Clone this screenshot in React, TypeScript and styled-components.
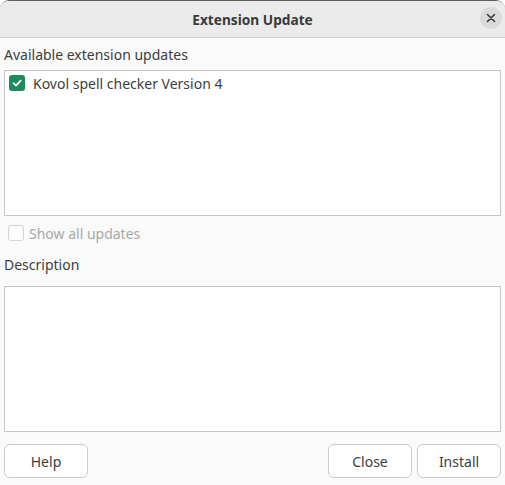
import React from "react";
import styled, { createGlobalStyle } from "styled-components";

const Global = createGlobalStyle`
  html, body { margin: 0; padding: 0; background: #ffffff; }
  body { font-family: "Noto Sans", "DejaVu Sans", sans-serif; }
  * { box-sizing: border-box; }
`;

const Window = styled.div`
  width: 505px;
  height: 485px;
  display: flex;
  flex-direction: column;
  background: #fafafa;
  border-top: 1px solid #5e5e5e;
  border-radius: 9px 9px 0 0;
  overflow: hidden;
  color: #3d3d3d;
  font-size: 14px;
`;

const TitleBar = styled.div`
  height: 37px;
  flex: none;
  position: relative;
  display: flex;
  align-items: center;
  justify-content: center;
  background: #ebebeb;
  border-bottom: 1px solid #cfcfcf;
  font-weight: bold;
  font-size: 13.7px;
  color: #3a3a3a;
`;

const CloseButton = styled.div`
  position: absolute;
  right: 3px;
  top: 6px;
  width: 22px;
  height: 22px;
  border-radius: 50%;
  background: #dadada;
  display: flex;
  align-items: center;
  justify-content: center;
`;

const Body = styled.div`
  flex: 1;
  display: flex;
  flex-direction: column;
  padding: 7px 4px 7px 4px;
`;

const Label = styled.div<{ $top?: number; $bottom?: number }>`
  height: 20px;
  line-height: 20px;
  margin-top: ${(p) => p.$top ?? 0}px;
  margin-bottom: ${(p) => p.$bottom ?? 5}px;
`;

const ListBox = styled.div`
  height: 146px;
  flex: none;
  background: #ffffff;
  border: 1px solid #c6c6c6;
  padding: 3px 4px;
`;

const Row = styled.div`
  display: flex;
  align-items: center;
  gap: 8px;
  height: 18px;
`;

const CheckBox = styled.div<{ $checked?: boolean; $disabled?: boolean }>`
  width: 16px;
  height: 16px;
  border-radius: 3px;
  flex: none;
  display: flex;
  align-items: center;
  justify-content: center;
  background: ${(p) => (p.$checked ? "#1f8a5c" : "#ffffff")};
  border: ${(p) => (p.$checked ? "none" : p.$disabled ? "1px solid #d4d4d4" : "1px solid #999")};
`;

const OptionRow = styled.div`
  display: flex;
  align-items: center;
  gap: 5px;
  height: 18px;
  margin-top: 8px;
  padding-left: 4px;
  color: #a8a8a8;
`;

const DescBox = styled.div`
  height: 146px;
  flex: none;
  background: #ffffff;
  border: 1px solid #c6c6c6;
`;

const ButtonRow = styled.div`
  display: flex;
  gap: 5px;
  margin-top: 12px;
`;

const Spacer = styled.div`
  flex: 1;
`;

const Button = styled.div`
  width: 84px;
  height: 34px;
  border: 1px solid #cbcbcb;
  border-radius: 6px;
  background: #ffffff;
  display: flex;
  align-items: center;
  justify-content: center;
  color: #3d3d3d;
`;

export default function App() {
  return (
    <>
      <Global />
      <Window>
        <TitleBar>
          Extension Update
          <CloseButton>
            <svg width="10" height="10" viewBox="0 0 10 10">
              <path d="M1.5 1.5 L8.5 8.5 M8.5 1.5 L1.5 8.5" stroke="#3a3a3a" strokeWidth="1.6" strokeLinecap="round" />
            </svg>
          </CloseButton>
        </TitleBar>
        <Body>
          <Label>Available extension updates</Label>
          <ListBox>
            <Row>
              <CheckBox $checked>
                <svg width="12" height="12" viewBox="0 0 12 12">
                  <path d="M2.5 6.2 L5 8.6 L9.6 3.6" stroke="#ffffff" strokeWidth="1.8" fill="none" strokeLinecap="round" strokeLinejoin="round" />
                </svg>
              </CheckBox>
              Kovol spell checker Version 4
            </Row>
          </ListBox>
          <OptionRow>
            <CheckBox $disabled />
            Show all updates
          </OptionRow>
          <Label $top={13} $bottom={11}>Description</Label>
          <DescBox />
          <ButtonRow>
            <Button>Help</Button>
            <Spacer />
            <Button>Close</Button>
            <Button>Install</Button>
          </ButtonRow>
        </Body>
      </Window>
    </>
  );
}
